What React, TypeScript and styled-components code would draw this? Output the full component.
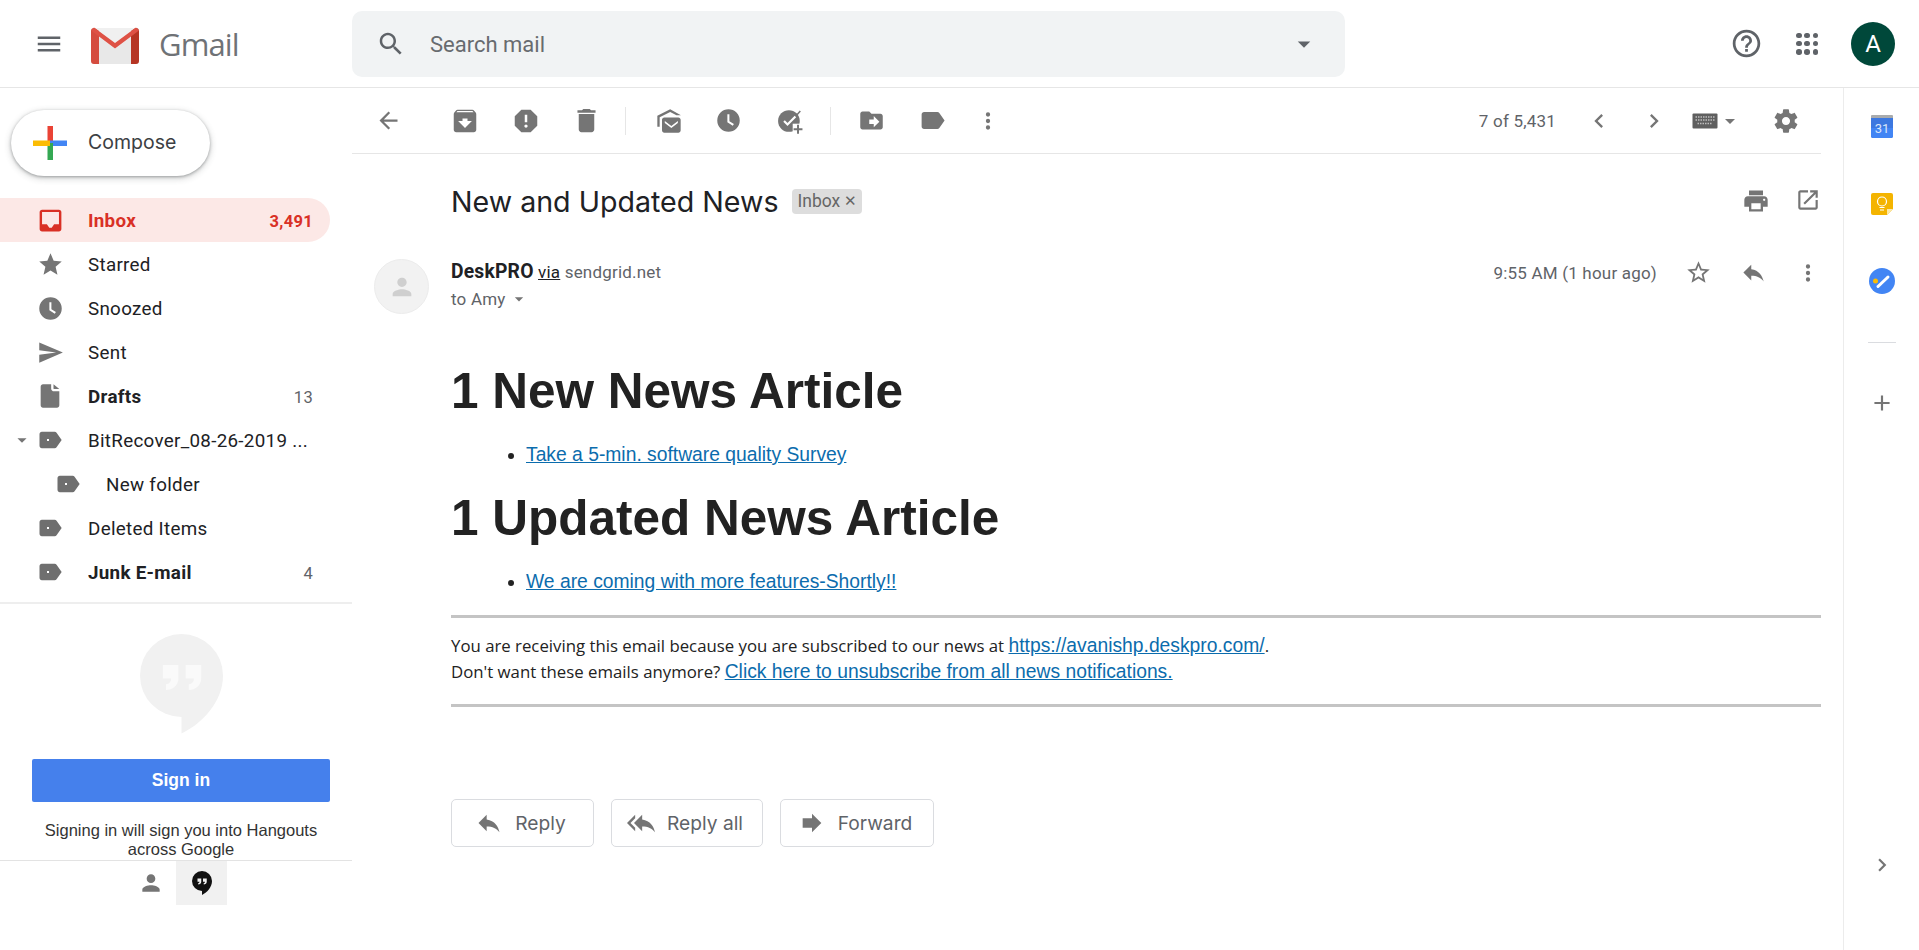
import React from 'react';
import styled, { createGlobalStyle } from 'styled-components';

const P = {
  menu: 'M3 18h18v-2H3v2zm0-5h18v-2H3v2zm0-7v2h18V6H3z',
  search: 'M15.5 14h-.79l-.28-.27C15.41 12.59 16 11.11 16 9.5 16 5.91 13.09 3 9.5 3S3 5.91 3 9.5 5.91 16 9.5 16c1.61 0 3.09-.59 4.23-1.57l.27.28v.79l5 4.99L20.49 19l-4.99-5zm-6 0C7.01 14 5 11.99 5 9.5S7.01 5 9.5 5 14 7.01 14 9.5 11.99 14 9.5 14z',
  help: 'M11 18h2v-2h-2v2zm1-16C6.48 2 2 6.48 2 12s4.48 10 10 10 10-4.48 10-10S17.52 2 12 2zm0 18c-4.41 0-8-3.59-8-8s3.59-8 8-8 8 3.59 8 8-3.59 8-8 8zm0-14c-2.21 0-4 1.79-4 4h2c0-1.1.9-2 2-2s2 .9 2 2c0 2-3 1.75-3 5h2c0-2.25 3-2.5 3-5 0-2.21-1.79-4-4-4z',
  inbox: 'M19 3H5C3.9 3 3 3.9 3 5v14c0 1.1.9 2 2 2h14c1.1 0 2-.9 2-2V5c0-1.1-.9-2-2-2zm0 12h-4l-2 3h-2l-2-3H5V5h14v10z',
  star: 'M12 17.27L18.18 21l-1.64-7.03L22 9.24l-7.19-.61L12 2 9.19 8.63 2 9.24l5.46 4.73L5.82 21z',
  starBorder: 'M22 9.24l-7.19-.62L12 2 9.19 8.63 2 9.24l5.46 4.73L5.82 21 12 17.27 18.18 21l-1.63-7.03L22 9.24zM12 15.4l-3.76 2.27 1-4.28-3.32-2.88 4.38-.38L12 6.1l1.71 4.04 4.38.38-3.32 2.88 1 4.28L12 15.4z',
  clock: 'M12 2a10 10 0 100 20 10 10 0 000-20zm3.8 14.6L11 13.6V6.5h1.8v6.1l4 2.4-1 1.6z',
  send: 'M2.01 21L23 12 2.01 3 2 10l15 2-15 2z',
  draft: 'M6 2c-1.1 0-2 .9-2 2v16c0 1.1.9 2 2 2h12c1.1 0 2-.9 2-2V8h-4.5C14.1 8 13 6.9 13 5.5V2H6zm9 0v3.5c0 .3.2.5.5.5H20l-5-4z',
  label: 'M17.63 5.84C17.27 5.33 16.67 5 16 5L5 5.01C3.9 5.01 3 5.9 3 7v10c0 1.1.9 1.99 2 1.99L16 19c.67 0 1.27-.33 1.63-.84L22 12l-4.37-6.16z',
  archive: 'M20.54 5.23l-1.39-1.68C18.88 3.21 18.47 3 18 3H6c-.47 0-.88.21-1.16.55L3.46 5.23C3.17 5.57 3 6.02 3 6.5V19c0 1.1.9 2 2 2h14c1.1 0 2-.9 2-2V6.5c0-.48-.17-.93-.46-1.27zM12 17.5L6.5 12H10v-2h4v2h3.5L12 17.5zM5.12 5l.81-1h12l.94 1H5.12z',
  report: 'M15.73 3H8.27L3 8.27v7.46L8.27 21h7.46L21 15.73V8.27L15.73 3zM12 17.3c-.72 0-1.3-.58-1.3-1.3 0-.72.58-1.3 1.3-1.3.72 0 1.3.58 1.3 1.3 0 .72-.58 1.3-1.3 1.3zm1-4.3h-2V7h2v6z',
  trash: 'M6 19c0 1.1.9 2 2 2h8c1.1 0 2-.9 2-2V7H6v12zM19 4h-3.5l-1-1h-5l-1 1H5v2h14V4z',
  markUnread: 'M8 9h12c1.1 0 2 .9 2 2v9c0 1.1-.9 2-2 2H8c-1.1 0-2-.9-2-2v-9c0-1.1.9-2 2-2zm6 7.200L8.400 12v1.800l5.600 4.200 5.600-4.200V12L14 16.200zM13 2L2 7.500V17h2V8.800L13 4.200l5.400 2.800h3.800L13 2z',
  move: 'M20 6h-8l-2-2H4c-1.1 0-1.99.9-1.99 2L2 18c0 1.1.9 2 2 2h16c1.1 0 2-.9 2-2V8c0-1.1-.9-2-2-2zm-6 12v-3h-4v-4h4V8l5 5-5 5z',
  back: 'M20 11H7.83l5.59-5.59L12 4l-8 8 8 8 1.41-1.41L7.83 13H20v-2z',
  left: 'M15.41 7.41L14 6l-6 6 6 6 1.41-1.41L10.83 12z',
  right: 'M10 6L8.59 7.41 13.17 12l-4.58 4.59L10 18l6-6z',
  gear: 'M19.43 12.98c.04-.32.07-.64.07-.98s-.03-.66-.07-.98l2.11-1.65c.19-.15.24-.42.12-.64l-2-3.46c-.12-.22-.39-.3-.61-.22l-2.49 1c-.52-.4-1.08-.73-1.69-.98l-.38-2.65C14.46 2.18 14.25 2 14 2h-4c-.25 0-.46.18-.49.42l-.38 2.65c-.61.25-1.17.59-1.69.98l-2.49-1c-.23-.09-.49 0-.61.22l-2 3.46c-.13.22-.07.49.12.64l2.11 1.65c-.04.32-.07.65-.07.98s.03.66.07.98l-2.11 1.65c-.19.15-.24.42-.12.64l2 3.46c.12.22.39.3.61.22l2.49-1c.52.4 1.08.73 1.69.98l.38 2.65c.03.24.24.42.49.42h4c.25 0 .46-.18.49-.42l.38-2.65c.61-.25 1.17-.59 1.69-.98l2.49 1c.23.09.49 0 .61-.22l2-3.46c.12-.22.07-.49-.12-.64l-2.11-1.65zM12 15.5c-1.93 0-3.5-1.57-3.5-3.5s1.57-3.5 3.5-3.5 3.5 1.57 3.5 3.5-1.57 3.5-3.5 3.5z',
  print: 'M19 8H5c-1.66 0-3 1.34-3 3v6h4v4h12v-4h4v-6c0-1.66-1.34-3-3-3zm-3 11H8v-5h8v5zm3-7c-.55 0-1-.45-1-1s.45-1 1-1 1 .45 1 1-.45 1-1 1zm-1-9H6v4h12V3z',
  popout: 'M19 19H5V5h7V3H5c-1.11 0-2 .9-2 2v14c0 1.1.89 2 2 2h14c1.1 0 2-.9 2-2v-7h-2v7zM14 3v2h3.59l-9.83 9.83 1.41 1.41L19 6.41V10h2V3h-7z',
  reply: 'M10 9V5l-7 7 7 7v-4.1c5 0 8.5 1.6 11 5.1-1-5-4-10-11-11z',
  replyAll: 'M7 8V5l-7 7 7 7v-3l-4-4 4-4zm6 1V5l-7 7 7 7v-4.1c5 0 8.5 1.6 11 5.1-1-5-4-10-11-11z',
  forward: 'M12 8V4l8 8-8 8v-4H4V8z',
  person: 'M12 12c2.21 0 4-1.79 4-4s-1.79-4-4-4-4 1.79-4 4 1.79 4 4 4zm0 2c-2.67 0-8 1.34-8 4v2h16v-2c0-2.66-5.33-4-8-4z',
  plus: 'M19 13h-6v6h-2v-6H5v-2h6V5h2v6h6v2z',
  caret: 'M7 10l5 5 5-5z',
  more: 'M12 8a2 2 0 100-4 2 2 0 000 4zm0 2a2 2 0 100 4 2 2 0 000-4zm0 6a2 2 0 100 4 2 2 0 000-4z',
};

const GlobalStyle = createGlobalStyle`
  html, body { margin: 0; padding: 0; background: #fff; height: 100%; overflow: hidden; }
  body { font-family: Roboto, "Noto Sans", sans-serif; color: #202124; }
  * { box-sizing: border-box; }
`;

const Svg = styled.svg`
  flex: none;
  display: block;
`;

const Icon = ({ d, size = 24, color = '#757575' }: { d: string; size?: number; color?: string }) => (
  <Svg width={size} height={size} viewBox="0 0 24 24" fill={color}>
    <path d={d} />
  </Svg>
);

const Page = styled.div`
  width: 1919px;
  height: 950px;
  display: flex;
  flex-direction: column;
  overflow: hidden;
`;

const Header = styled.header`
  height: 88px;
  flex: none;
  display: flex;
  align-items: center;
  border-bottom: 1px solid #e6e6e6;
`;

const Brand = styled.div`
  width: 352px;
  flex: none;
  display: flex;
  align-items: center;
  padding-left: 34px;
`;

const LogoSlot = styled.span`
  margin: 2px 19px 0 26px;
  display: flex;
`;

const LogoWord = styled.span`
  font-family: "Open Sans", sans-serif;
  font-size: 31px;
  letter-spacing: -0.9px;
  color: #6f7276;
`;

const SearchBox = styled.div`
  width: 993px;
  height: 66px;
  background: #f1f3f4;
  border-radius: 10px;
  display: flex;
  align-items: center;
  padding: 0 26px 0 24px;
`;

const SearchText = styled.span`
  flex: 1;
  margin-left: 24px;
  padding-top: 2px;
  font-size: 22px;
  color: #686b6f;
`;

const HeaderRight = styled.div`
  margin-left: auto;
  display: flex;
  align-items: center;
  padding-right: 24px;
`;

const AppsGrid = styled.div`
  display: grid;
  grid-template-columns: repeat(3, 5.500px);
  gap: 2.750px;
  margin: 0 33px;
`;

const AppsDot = styled.i`
  width: 5.500px;
  height: 5.500px;
  border-radius: 50%;
  background: #5f6368;
`;

const Avatar = styled.div`
  width: 44px;
  height: 44px;
  border-radius: 50%;
  background: #00483a;
  color: #fff;
  font-size: 24px;
  display: flex;
  align-items: center;
  justify-content: center;
`;

const Body = styled.div`
  flex: 1;
  min-height: 0;
  display: flex;
`;

const Sidebar = styled.aside`
  width: 352px;
  flex: none;
  display: flex;
  flex-direction: column;
`;

const ComposeButton = styled.div`
  width: 199px;
  height: 66px;
  margin: 22px 0 22px 11px;
  border-radius: 33px;
  background: #fff;
  box-shadow: 0 1px 3px rgba(60, 64, 67, 0.4), 0 2px 6px 1px rgba(60, 64, 67, 0.2);
  display: flex;
  align-items: center;
  padding-left: 22px;
  font-family: Inter, sans-serif;
  font-size: 19.500px;
  color: #3c4043;
`;

const ComposeLabel = styled.span`
  margin-left: 21px;
  padding-bottom: 2px;
`;

const NavList = styled.nav`
  display: flex;
  flex-direction: column;
  height: 404px;
`;

const NavRow = styled.div<{ $active?: boolean; $bold?: boolean; $indent?: boolean }>`
  height: 44px;
  width: 330px;
  flex: none;
  display: flex;
  align-items: center;
  padding: 0 17px 0 ${(p) => (p.$indent ? '55px' : '37px')};
  border-radius: 0 22px 22px 0;
  font-size: 18.800px;
  letter-spacing: 0.3px;
  background: ${(p) => (p.$active ? '#fce8e6' : 'transparent')};
  color: ${(p) => (p.$active ? '#d93025' : '#202124')};
  font-weight: ${(p) => (p.$bold || p.$active ? 700 : 400)};
  position: relative;
`;

const NavIcon = styled.span`
  width: 26px;
  flex: none;
  margin-right: 25px;
  display: flex;
  justify-content: center;
`;

const NavLabel = styled.span`
  flex: 1;
  min-width: 0;
  padding-top: 2px;
  white-space: nowrap;
  overflow: hidden;
`;

const NavCount = styled.span<{ $active?: boolean }>`
  padding-top: 2px;
  font-size: 16.500px;
  font-weight: ${(p) => (p.$active ? 700 : 400)};
  color: ${(p) => (p.$active ? '#d93025' : '#5f6368')};
`;

const Expander = styled.span`
  position: absolute;
  left: 11px;
  top: 11px;
`;

const LabelWrap = styled.span`
  position: relative;
  display: block;
`;

const LabelDot = styled.i`
  position: absolute;
  left: 11px;
  top: 13px;
  width: 2px;
  height: 2px;
  background: #fff;
`;

const Hangouts = styled.div`
  flex: 1;
  display: flex;
  flex-direction: column;
  align-items: center;
  border-top: 2px solid #eeeeee;
`;

const SignInPanel = styled.div`
  height: 257px;
  flex: none;
  width: 100%;
  display: flex;
  flex-direction: column;
  align-items: center;
  padding: 30px 0 0 10px;
  border-bottom: 1px solid #e3e3e3;
  overflow: hidden;
`;

const SignInButton = styled.div`
  width: 298px;
  height: 43px;
  flex: none;
  margin-top: 25px;
  background: #4580ec;
  border-radius: 2px;
  color: #fff;
  font-family: "Liberation Sans", Arial, sans-serif;
  font-weight: 700;
  font-size: 17.500px;
  display: flex;
  align-items: center;
  justify-content: center;
`;

const SignInHint = styled.div`
  width: 298px;
  margin-top: 19px;
  text-align: center;
  font-family: "Liberation Sans", Arial, sans-serif;
  font-size: 16.500px;
  line-height: 19px;
  color: #333;
`;

const HangoutTabs = styled.div`
  display: flex;
  align-self: flex-start;
  margin-left: 125px;
`;

const HangoutTab = styled.div<{ $selected?: boolean }>`
  width: 51px;
  height: 44px;
  display: flex;
  align-items: center;
  justify-content: center;
  background: ${(p) => (p.$selected ? '#f1f1f1' : 'transparent')};
`;

const Main = styled.main`
  flex: 1;
  min-width: 0;
  display: flex;
  flex-direction: column;
  padding-right: 22px;
`;

const Toolbar = styled.div`
  height: 66px;
  flex: none;
  display: flex;
  align-items: center;
  border-bottom: 1px solid #e6e6e6;
  padding: 0 21px 0 23px;
`;

const ToolIcon = styled.span<{ $gap?: number }>`
  display: flex;
  width: 26px;
  flex: none;
  justify-content: center;
  margin-left: ${(p) => p.$gap ?? 0}px;
`;

const ToolWide = styled.span<{ $gap?: number }>`
  display: flex;
  margin-left: ${(p) => p.$gap ?? 0}px;
`;

const ToolDivider = styled.span<{ $gap: number }>`
  width: 1px;
  height: 28px;
  background: #e6e6e6;
  margin-left: ${(p) => p.$gap}px;
`;

const Pager = styled.span`
  margin-left: auto;
  font-size: 17px;
  letter-spacing: 0.2px;
  color: #5f6368;
`;

const Subject = styled.div`
  display: flex;
  align-items: center;
  height: 76px;
  flex: none;
  padding: 18px 0 0 99px;
`;

const SubjectText = styled.h2`
  margin: 0;
  font-family: Inter, sans-serif;
  font-weight: 400;
  font-size: 28.600px;
  color: #202124;
`;

const Chip = styled.span`
  margin-left: 14px;
  height: 25px;
  padding: 0 5px;
  border-radius: 4px;
  background: #dddddd;
  color: #666;
  font-size: 17.500px;
  display: flex;
  align-items: center;
  gap: 4px;
`;

const ChipClose = styled.span`
  font-size: 15px;
`;

const SubjectActions = styled.div`
  margin-left: auto;
  display: flex;
  gap: 25px;
`;

const SenderRow = styled.div`
  display: flex;
  height: 68px;
  flex: none;
  margin-top: 29px;
  padding-left: 22px;
`;

const SenderAvatar = styled.div`
  width: 55px;
  height: 55px;
  border-radius: 50%;
  background: #f2f2f2;
  border: 1px solid #ececec;
  display: flex;
  align-items: center;
  justify-content: center;
  flex: none;
`;

const SenderInfo = styled.div`
  margin-left: 22px;
  font-size: 17px;
  line-height: 26.500px;
  letter-spacing: 0.2px;
  color: #5f6368;
`;

const SenderName = styled.strong`
  font-weight: 700;
  font-size: 19.300px;
  color: #202124;
`;

const Via = styled.span`
  text-decoration: underline;
  color: #202124;
`;

const ToLine = styled.div`
  display: flex;
  align-items: center;
  gap: 3px;
`;

const SenderMeta = styled.div`
  margin-left: auto;
  height: 27px;
  display: flex;
  align-items: center;
  gap: 28px;
`;

const Time = styled.span`
  font-size: 17px;
  letter-spacing: 0.2px;
  color: #5f6368;
`;

const MessageBody = styled.div`
  padding-left: 99px;
  font-family: "Liberation Sans", Arial, sans-serif;
  font-size: 19.300px;
  color: #222;
`;

const Heading = styled.h1<{ $top: number }>`
  margin: ${(p) => p.$top}px 0 0;
  font-size: 49.500px;
  line-height: 60px;
  font-weight: 700;
  color: #222;
`;

const Bullets = styled.ul`
  margin: 0;
  padding: 23px 0 0 75px;
  height: 55px;
  line-height: 21px;
`;

const MailLink = styled.a`
  color: #0b6cad;
  text-decoration: underline;
`;

const Rule = styled.hr<{ $top?: number }>`
  margin: ${(p) => p.$top ?? 0}px 0 0;
  border: 0;
  height: 3px;
  background: #c4c4c4;
`;

const Footnote = styled.div`
  padding: 15px 0 20px;
  line-height: 25.500px;
  font-family: "Open Sans", sans-serif;
  font-size: 16.800px;
`;

const FootLink = styled(MailLink)`
  font-family: "Liberation Sans", Arial, sans-serif;
  font-size: 19.300px;
`;

const ReplyBar = styled.div`
  display: flex;
  gap: 17px;
  margin-top: 92px;
  padding-left: 99px;
`;

const ReplyButton = styled.div<{ $width: number }>`
  width: ${(p) => p.$width}px;
  height: 48px;
  padding-right: 4px;
  border: 1px solid #dadce0;
  border-radius: 5px;
  display: flex;
  align-items: center;
  justify-content: center;
  gap: 12px;
  font-family: Inter, sans-serif;
  font-size: 19.200px;
  color: #5f6368;
`;

const Rail = styled.aside`
  width: 76px;
  flex: none;
  border-left: 1px solid #ececec;
  display: flex;
  flex-direction: column;
  align-items: center;
  padding-top: 27px;
`;

const RailApp = styled.div<{ $h: number }>`
  height: ${(p) => p.$h}px;
  flex: none;
`;

const RailDivider = styled.div`
  width: 28px;
  height: 1px;
  background: #dadce0;
`;

const RailPlus = styled.div`
  margin-top: 47px;
`;

const RailChevron = styled.div`
  margin-top: auto;
  margin-bottom: 72px;
`;

const GmailLogo = () => (
  <svg width="50" height="38" viewBox="0 0 50 38">
    <path d="M4 2h42a3 3 0 013 3v30a3 3 0 01-3 3H4a3 3 0 01-3-3V5a3 3 0 013-3z" fill="#f0f0f0" />
    <path d="M9 11 25 23 41 11v27H9z" fill="#e8e8e8" />
    <path d="M1 35V5c0-2.500 2.600-3.800 4.700-2.300L9 5v33H4a3 3 0 01-3-3z" fill="#d54c3f" />
    <path d="M41 38V5l3.300-2.300C46.400 1.200 49 2.500 49 5v30a3 3 0 01-3 3z" fill="#b63524" />
    <path d="M4 1.500 25 17 46 1.500l3 3L25 22.500 1 4.500z" fill="#de5145" />
  </svg>
);

const ComposePlus = () => (
  <svg width="34" height="34" viewBox="0 0 34 34">
    <rect x="14.500" y="0" width="5.500" height="17" fill="#ea4335" />
    <rect x="17" y="14.500" width="17" height="5.500" fill="#4285f4" />
    <rect x="14.500" y="17" width="5.500" height="17" fill="#34a853" />
    <rect x="0" y="14.500" width="17" height="5.500" fill="#fbbc04" />
  </svg>
);

const HangoutBubble = ({ size, color, quote }: { size: number; color: string; quote: string }) => (
  <svg width={size} height={size * 1.2} viewBox="0 0 40 48">
    <path d="M20 0a20 20 0 00-20 20 20 20 0 0020 20v8c11-5.500 20-16 20-28A20 20 0 0020 0z" fill={color} />
    <path d="M11 15h7.500v6.500c0 3.500-3 5.500-6 5.500v-2.800c1.500 0 2.500-1 2.500-2.700h-4zM22 15h7.500v6.500c0 3.500-3 5.500-6 5.500v-2.800c1.500 0 2.500-1 2.500-2.700h-4z" fill={quote} />
  </svg>
);

const AddTaskIcon = () => (
  <svg width="28" height="28" viewBox="0 0 24 24">
    <circle cx="11" cy="12" r="10" fill="#757575" />
    <path d="M6.500 12l3.200 3.200 7.300-7.400" fill="none" stroke="#fff" strokeWidth="2" />
    <path d="M17.500 7.300 21.500 2.800" fill="none" stroke="#757575" strokeWidth="1.400" />
    <rect x="14.500" y="14.500" width="9.500" height="9.500" fill="#fff" />
    <path d="M18.500 15.500h1.800v3.200h3.200v1.800h-3.200v3.200h-1.800v-3.200h-3.200v-1.800h3.200z" fill="#757575" />
  </svg>
);

const KeyboardIcon = () => (
  <svg width="26" height="16" viewBox="0 0 25 16">
    <rect width="25" height="15" y="0.500" rx="1" fill="#5f5f5f" />
    <path d="M3 4h19M3 7h19M5 10.500h15" stroke="#bdbdbd" strokeWidth="1.500" strokeDasharray="1.500 1" />
  </svg>
);

const CalendarIcon = () => (
  <svg width="22" height="23" viewBox="0 0 22 23">
    <rect y="0" width="22" height="5" rx="1" fill="#a9abad" />
    <path d="M0 3h22v18a2 2 0 01-2 2H2a2 2 0 01-2-2z" fill="#3c78e0" />
    <path d="M0 13h22v8a2 2 0 01-2 2H2a2 2 0 01-2-2z" fill="#4285f4" />
    <text x="11" y="18" textAnchor="middle" fontFamily="Roboto, sans-serif" fontSize="13" fill="#dbe6fb">31</text>
  </svg>
);

const KeepIcon = () => (
  <svg width="22" height="22" viewBox="0 0 22 22">
    <path d="M2 0h18a2 2 0 012 2v14l-6 6H2a2 2 0 01-2-2V2a2 2 0 012-2z" fill="#f4b400" />
    <path d="M22 16h-6v6z" fill="#fbe8a9" />
    <circle cx="11" cy="8.500" r="4.500" fill="none" stroke="#fff" strokeWidth="1.200" />
    <path d="M8.500 14.500h5M9 17h4" stroke="#fff" strokeWidth="1.200" />
  </svg>
);

const TasksIcon = () => (
  <svg width="26" height="26" viewBox="0 0 26 26">
    <circle cx="13" cy="13" r="13" fill="#4285f4" />
    <circle cx="6.500" cy="13" r="2.500" fill="#fbbc04" />
    <path d="M9 18.500 19 9" stroke="#fff" strokeWidth="3" strokeLinecap="round" />
  </svg>
);

const nav = [
  { label: 'Starred', d: P.star, size: 27 },
  { label: 'Snoozed', d: P.clock, size: 27 },
  { label: 'Sent', d: P.send, size: 27 },
];

const LabelIcon = () => (
  <LabelWrap>
    <Icon d={P.label} size={28} color="#6f6f6f" />
    <LabelDot />
  </LabelWrap>
);

export default function App() {
  return (
    <Page>
      <GlobalStyle />
      <Header>
        <Brand>
          <Icon d={P.menu} size={30} color="#5f6368" />
          <LogoSlot><GmailLogo /></LogoSlot>
          <LogoWord>Gmail</LogoWord>
        </Brand>
        <SearchBox>
          <Icon d={P.search} size={30} color="#5f6368" />
          <SearchText>Search mail</SearchText>
          <Icon d={P.caret} size={30} color="#5f6368" />
        </SearchBox>
        <HeaderRight>
          <Icon d={P.help} size={33} color="#5f6368" />
          <AppsGrid>
            {Array.from({ length: 9 }).map((_, i) => (
              <AppsDot key={i} />
            ))}
          </AppsGrid>
          <Avatar>A</Avatar>
        </HeaderRight>
      </Header>
      <Body>
        <Sidebar>
          <ComposeButton>
            <ComposePlus />
            <ComposeLabel>Compose</ComposeLabel>
          </ComposeButton>
          <NavList>
            <NavRow $active>
              <NavIcon><Icon d={P.inbox} size={29} color="#d93025" /></NavIcon>
              <NavLabel>Inbox</NavLabel>
              <NavCount $active>3,491</NavCount>
            </NavRow>
            {nav.map((n) => (
              <NavRow key={n.label}>
                <NavIcon><Icon d={n.d} size={n.size} color="#757575" /></NavIcon>
                <NavLabel>{n.label}</NavLabel>
              </NavRow>
            ))}
            <NavRow $bold>
              <NavIcon><Icon d={P.draft} size={28} color="#757575" /></NavIcon>
              <NavLabel>Drafts</NavLabel>
              <NavCount>13</NavCount>
            </NavRow>
            <NavRow>
              <Expander><Icon d={P.caret} size={22} color="#757575" /></Expander>
              <NavIcon><LabelIcon /></NavIcon>
              <NavLabel>BitRecover_08-26-2019 ...</NavLabel>
            </NavRow>
            <NavRow $indent>
              <NavIcon><LabelIcon /></NavIcon>
              <NavLabel>New folder</NavLabel>
            </NavRow>
            <NavRow>
              <NavIcon><LabelIcon /></NavIcon>
              <NavLabel>Deleted Items</NavLabel>
            </NavRow>
            <NavRow $bold>
              <NavIcon><LabelIcon /></NavIcon>
              <NavLabel>Junk E-mail</NavLabel>
              <NavCount>4</NavCount>
            </NavRow>
          </NavList>
          <Hangouts>
            <SignInPanel>
              <HangoutBubble size={83} color="#f1f1f1" quote="#fafafa" />
              <SignInButton>Sign in</SignInButton>
              <SignInHint>Signing in will sign you into Hangouts across Google</SignInHint>
            </SignInPanel>
            <HangoutTabs>
              <HangoutTab><Icon d={P.person} size={26} color="#757575" /></HangoutTab>
              <HangoutTab $selected><HangoutBubble size={20} color="#111" quote="#f1f1f1" /></HangoutTab>
            </HangoutTabs>
          </Hangouts>
        </Sidebar>
        <Main>
          <Toolbar>
            <ToolIcon><Icon d={P.back} size={27} /></ToolIcon>
            <ToolIcon $gap={51}><Icon d={P.archive} size={30} /></ToolIcon>
            <ToolIcon $gap={34.5}><Icon d={P.report} size={30} /></ToolIcon>
            <ToolIcon $gap={34.5}><Icon d={P.trash} size={31} /></ToolIcon>
            <ToolDivider $gap={25.5} />
            <ToolIcon $gap={30}><Icon d={P.markUnread} size={28} /></ToolIcon>
            <ToolIcon $gap={34}><Icon d={P.clock} size={27} /></ToolIcon>
            <ToolIcon $gap={35}><AddTaskIcon /></ToolIcon>
            <ToolDivider $gap={27} />
            <ToolIcon $gap={28}><Icon d={P.move} size={27} /></ToolIcon>
            <ToolIcon $gap={35}><Icon d={P.label} size={29} /></ToolIcon>
            <ToolIcon $gap={29}><Icon d={P.more} size={26} /></ToolIcon>
            <Pager>7 of 5,431</Pager>
            <ToolIcon $gap={29.5}><Icon d={P.left} size={28} /></ToolIcon>
            <ToolIcon $gap={29.5}><Icon d={P.right} size={28} /></ToolIcon>
            <ToolWide $gap={25}><KeyboardIcon /></ToolWide>
            <ToolWide><Icon d={P.caret} size={24} /></ToolWide>
            <ToolWide $gap={30}><Icon d={P.gear} size={28} /></ToolWide>
          </Toolbar>
          <Subject>
            <SubjectText>New and Updated News</SubjectText>
            <Chip>Inbox <ChipClose>✕</ChipClose></Chip>
            <SubjectActions>
              <Icon d={P.print} size={28} />
              <Icon d={P.popout} size={26} />
            </SubjectActions>
          </Subject>
          <SenderRow>
            <SenderAvatar><Icon d={P.person} size={28} color="#cfcfcf" /></SenderAvatar>
            <SenderInfo>
              <div><SenderName>DeskPRO</SenderName> <Via>via</Via> sendgrid.net</div>
              <ToLine>to Amy <Icon d={P.caret} size={20} /></ToLine>
            </SenderInfo>
            <SenderMeta>
              <Time>9:55 AM (1 hour ago)</Time>
              <Icon d={P.starBorder} size={27} />
              <Icon d={P.reply} size={27} />
              <Icon d={P.more} size={26} />
            </SenderMeta>
          </SenderRow>
          <MessageBody>
            <Heading $top={34}>1 New News Article</Heading>
            <Bullets><li><MailLink>Take a 5-min. software quality Survey</MailLink></li></Bullets>
            <Heading $top={12}>1 Updated News Article</Heading>
            <Bullets><li><MailLink>We are coming with more features-Shortly!!</MailLink></li></Bullets>
            <Rule $top={12} />
            <Footnote>
              You are receiving this email because you are subscribed to our news at <FootLink>https://avanishp.deskpro.com/</FootLink>.
              <br />
              Don't want these emails anymore? <FootLink>Click here to unsubscribe from all news notifications.</FootLink>
            </Footnote>
            <Rule />
          </MessageBody>
          <ReplyBar>
            <ReplyButton $width={143}><Icon d={P.reply} size={28} />Reply</ReplyButton>
            <ReplyButton $width={152}><Icon d={P.replyAll} size={28} />Reply all</ReplyButton>
            <ReplyButton $width={154}><Icon d={P.forward} size={28} />Forward</ReplyButton>
          </ReplyBar>
        </Main>
        <Rail>
          <RailApp $h={78}><CalendarIcon /></RailApp>
          <RailApp $h={75}><KeepIcon /></RailApp>
          <RailApp $h={74}><TasksIcon /></RailApp>
          <RailDivider />
          <RailPlus><Icon d={P.plus} size={26} /></RailPlus>
          <RailChevron><Icon d={P.right} size={26} /></RailChevron>
        </Rail>
      </Body>
    </Page>
  );
}
